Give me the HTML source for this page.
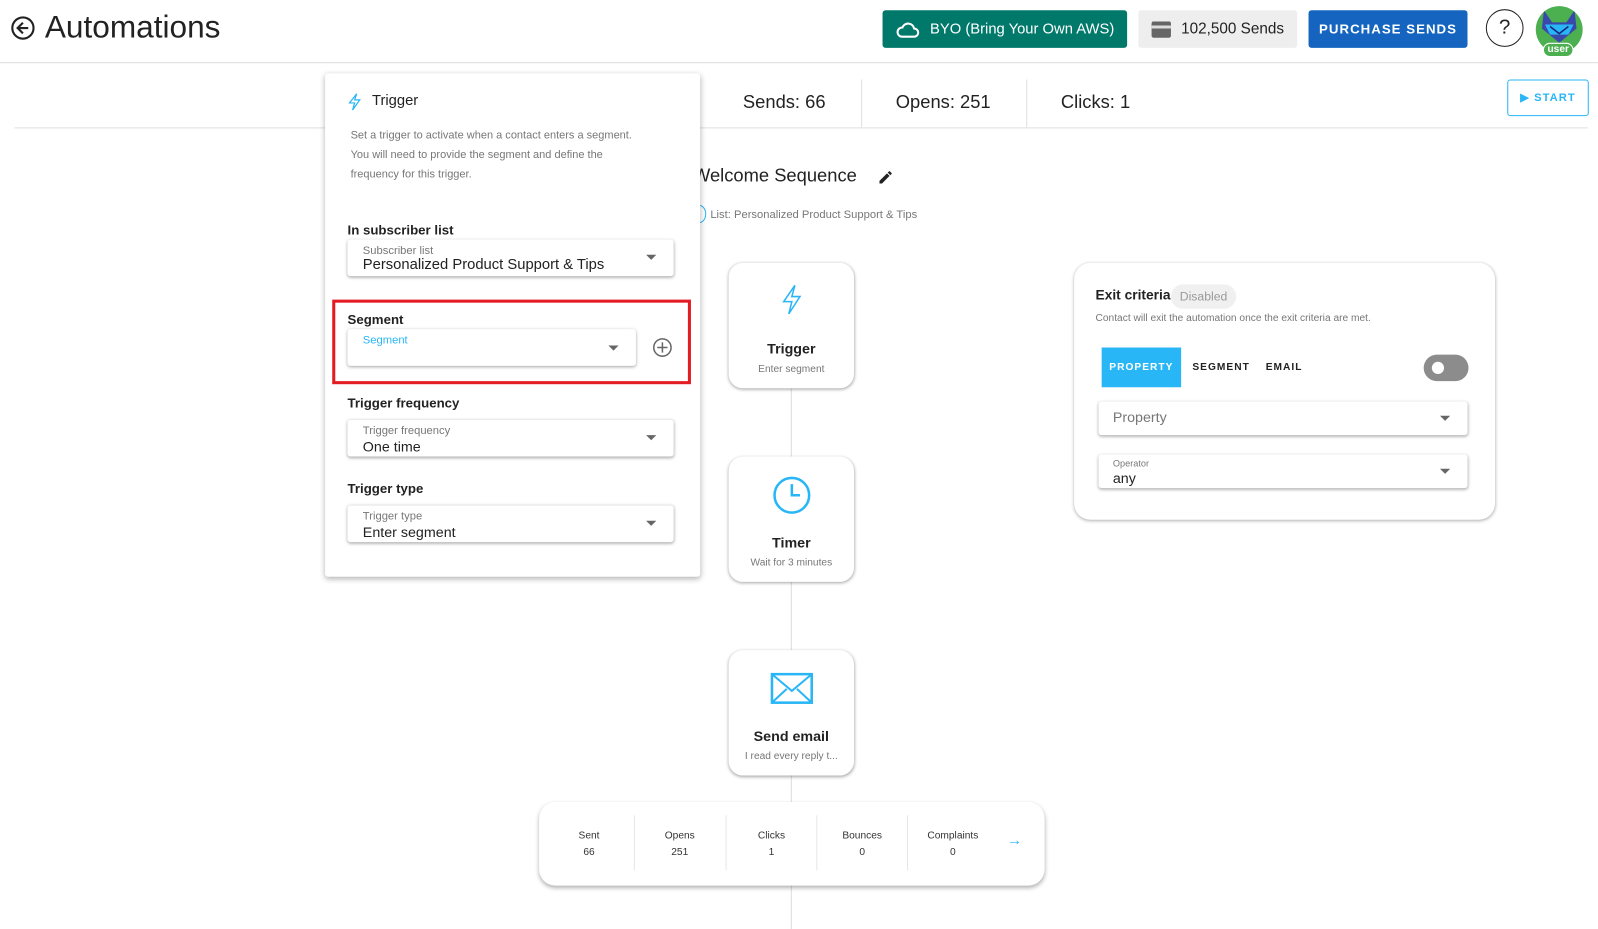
<!DOCTYPE html>
<html><head><meta charset="utf-8"><style>
*{box-sizing:border-box;margin:0;padding:0}
body{width:1598px;height:912px;overflow:hidden;background:#fff;font-family:"Liberation Sans",Roboto,sans-serif;color:#222;position:relative}
#w{position:absolute;left:0;top:0;width:1568px;height:895px;transform:scale(1.0191);transform-origin:0 0}
.a{position:absolute}
.btn{position:absolute;top:10px;height:37px;border-radius:3px;display:flex;align-items:center;justify-content:center;font-size:15px}
.card{position:absolute;background:#fff;border-radius:14px;box-shadow:0 1px 3px rgba(0,0,0,.35)}
.node{width:123px;height:123px;text-align:center}
.node .t{position:absolute;top:76px;width:100%;font-weight:bold;font-size:14px}
.node .s{position:absolute;top:99px;width:100%;font-size:10px;color:#777}
.field{position:absolute;background:#fff;border-radius:3px;box-shadow:0 1px 3px rgba(0,0,0,.35)}
.field .l{position:absolute;left:15px;top:5px;font-size:11px;color:#777}
.field .v{position:absolute;left:15px;top:17px;font-size:15px;color:#222}
.caret{position:absolute;right:17px;width:0;height:0;border-left:5px solid transparent;border-right:5px solid transparent;border-top:5px solid #666}
.lab{position:absolute;left:341px;font-size:13px;font-weight:bold;color:#222}
.st{position:absolute;top:813px;text-align:center;font-size:10px;color:#333;line-height:16px;width:90px}
.dv{position:absolute;top:800px;width:1px;height:54px;background:#e6e6e6}
</style></head><body><div id="w">
<svg class="a" style="left:10px;top:15px" width="25" height="25" viewBox="0 0 24 24"><circle cx="12" cy="12" r="10" fill="none" stroke="#222" stroke-width="2"/><path d="M17 12H8M12 7l-5 5 5 5" fill="none" stroke="#222" stroke-width="2"/></svg>
<div class="a" style="left:44px;top:9px;font-size:31px;color:#222">Automations</div>
<div class="btn" style="left:866px;width:240px;background:#00796b;color:#fff;font-size:14.5px"><svg width="24" height="18" viewBox="0 0 24 18" style="margin-right:10px"><path d="M6 16h12a4 4 0 0 0 0-8 6 6 0 0 0-11.5-1A4.5 4.5 0 0 0 6 16z" fill="none" stroke="#fff" stroke-width="2"/></svg>BYO (Bring Your Own AWS)</div>
<div class="btn" style="left:1117px;width:156px;background:#eee;color:#222"><span style="display:inline-block;width:19px;height:16px;background:#666;border-radius:2px;margin-right:10px;border-top:4px solid #666;box-shadow:inset 0 3px 0 #ddd"></span>102,500 Sends</div>
<div class="btn" style="left:1284px;width:156px;background:#1565c0;color:#fff;font-weight:bold;font-size:13px;letter-spacing:1px">PURCHASE SENDS</div>
<div class="a" style="left:1458px;top:9px;width:37px;height:37px;border:1.5px solid #222;border-radius:50%;text-align:center;line-height:34px;font-size:20px">?</div>
<div class="a" style="left:1507px;top:6px;width:46px;height:46px;border-radius:50%;background:#4caf50;overflow:hidden"><svg width="46" height="46" viewBox="0 0 46 46"><path d="M8 4l8 12h14l8-12 2 18-17 14L6 22z" fill="#3949ab"/><path d="M9 18h28l-5 10H14z" fill="#29b6f6"/><path d="M14 20l9 7 9-7" fill="none" stroke="#1a237e" stroke-width="1.5"/></svg></div>
<div class="a" style="left:1514px;top:42px;width:30px;height:14px;border-radius:7px;background:#4caf50;border:1px solid #fff;color:#fff;font-size:10px;font-weight:bold;text-align:center;line-height:12px">user</div>
<div class="a" style="left:0;top:61px;width:1568px;height:1px;background:#ddd"></div>
<div class="a" style="left:14px;top:125px;width:1544px;height:1px;background:#e0e0e0"></div>
<div class="a" style="left:845px;top:78px;width:1px;height:47px;background:#e0e0e0"></div>
<div class="a" style="left:1007px;top:78px;width:1px;height:47px;background:#e0e0e0"></div>
<div class="a" style="left:729px;top:90px;font-size:18px">Sends: 66</div>
<div class="a" style="left:879px;top:90px;font-size:18px">Opens: 251</div>
<div class="a" style="left:1041px;top:90px;font-size:18px">Clicks: 1</div>
<div class="a" style="left:1479px;top:78px;width:80px;height:36px;border:1px solid #29b6f6;border-radius:3px;color:#29b6f6;font-size:11px;font-weight:bold;letter-spacing:1px;line-height:34px;text-align:center">▶ START</div>
<div class="a" style="left:680px;top:162px;font-size:18px">Welcome Sequence</div>
<svg class="a" style="left:861px;top:166px" width="16" height="16" viewBox="0 0 24 24"><path d="M3 17.25V21h3.75L17.8 9.94l-3.75-3.75zM20.7 7.04a1 1 0 0 0 0-1.41l-2.34-2.34a1 1 0 0 0-1.41 0l-1.830 1.83 3.75 3.75z" fill="#222"/></svg>
<div class="a" style="left:679px;top:201px;width:14px;height:18px;border:1.5px solid #29b6f6;border-radius:50%"></div>
<div class="a" style="left:697px;top:205px;font-size:11px;color:#777">List: Personalized Product Support &amp; Tips</div>
<div class="a" style="left:776px;top:381px;width:1px;height:531px;background:#ddd"></div>
<div class="card node" style="left:715px;top:258px"><svg class="a" style="left:50px;top:20px" width="24" height="32" viewBox="0 0 24 32"><path d="M15 2L4 18h8l-3 12 11-17h-8z" fill="none" stroke="#29b6f6" stroke-width="1.5"/></svg><div class="t">Trigger</div><div class="s">Enter segment</div></div>
<div class="card node" style="left:715px;top:448px"><svg class="a" style="left:43px;top:19px" width="38" height="38" viewBox="0 0 38 38"><circle cx="19" cy="19" r="17" fill="none" stroke="#29b6f6" stroke-width="2.5"/><path d="M19 8v11h8" fill="none" stroke="#29b6f6" stroke-width="2.5"/></svg><div class="t">Timer</div><div class="s">Wait for 3 minutes</div></div>
<div class="card node" style="left:715px;top:638px"><svg class="a" style="left:41px;top:22px" width="42" height="31" viewBox="0 0 42 31"><rect x="1.5" y="1.5" width="39" height="28" fill="none" stroke="#29b6f6" stroke-width="2.5"/><path d="M2 2l19 16L40 2M2 29l14-13M40 29L26 16" fill="none" stroke="#29b6f6" stroke-width="2"/></svg><div class="t">Send email</div><div class="s">I read every reply t...</div></div>
<div class="card" style="left:529px;top:787px;width:496px;height:82px;border-radius:16px;box-shadow:0 2px 4px rgba(0,0,0,.3)"></div>
<div class="st" style="left:533px">Sent<br>66</div><div class="dv" style="left:622px"></div>
<div class="st" style="left:622px">Opens<br>251</div><div class="dv" style="left:712px"></div>
<div class="st" style="left:712px">Clicks<br>1</div><div class="dv" style="left:801px"></div>
<div class="st" style="left:801px">Bounces<br>0</div><div class="dv" style="left:890px"></div>
<div class="st" style="left:890px">Complaints<br>0</div>
<div class="a" style="left:988px;top:816px;color:#29b6f6;font-size:15px;font-weight:bold">→</div>
<div class="card" style="left:1054px;top:258px;width:413px;height:252px;border-radius:16px;box-shadow:0 1px 3px rgba(0,0,0,.3)"></div>
<div class="a" style="left:1075px;top:282px;font-size:13.5px;font-weight:bold">Exit criteria</div>
<div class="a" style="left:1149px;top:279px;width:64px;height:24px;border-radius:12px;background:#f0f0f0;color:#999;font-size:12px;text-align:center;line-height:24px">Disabled</div>
<div class="a" style="left:1075px;top:307px;font-size:10px;color:#777">Contact will exit the automation once the exit criteria are met.</div>
<div class="a" style="left:1081px;top:341px;width:78px;height:39px;background:#29b6f6;color:#fff;font-size:10px;font-weight:bold;letter-spacing:1px;line-height:39px;text-align:center">PROPERTY</div>
<div class="a" style="left:1170px;top:355px;font-size:10px;font-weight:bold;letter-spacing:1px;color:#222">SEGMENT</div>
<div class="a" style="left:1242px;top:355px;font-size:10px;font-weight:bold;letter-spacing:1px;color:#222">EMAIL</div>
<div class="a" style="left:1397px;top:348px;width:44px;height:26px;border-radius:13px;background:#8c8c8c"><div class="a" style="left:8px;top:7px;width:12px;height:12px;border-radius:50%;background:#fff"></div></div>
<div class="field" style="left:1078px;top:394px;width:362px;height:33px"><div class="a" style="left:14px;top:7px;font-size:14px;color:#777">Property</div><div class="caret" style="top:14px"></div></div>
<div class="field" style="left:1078px;top:446px;width:362px;height:33px"><div class="a" style="left:14px;top:4px;font-size:9px;color:#777">Operator</div><div class="a" style="left:14px;top:15px;font-size:14px">any</div><div class="caret" style="top:14px"></div></div>
<div class="a" style="left:319px;top:72px;width:368px;height:494px;background:#fff;box-shadow:0 2px 6px rgba(0,0,0,.3);border-radius:3px"></div>
<svg class="a" style="left:341px;top:91px" width="14" height="18" viewBox="0 0 14 18"><path d="M9 1L2 10h5l-2 7 7-10H7z" fill="none" stroke="#29b6f6" stroke-width="1.2"/></svg>
<div class="a" style="left:365px;top:91px;font-size:14.5px">Trigger</div>
<div class="a" style="left:344px;top:124px;width:285px;font-size:10.8px;color:#777;line-height:19px">Set a trigger to activate when a contact enters a segment. You will need to provide the segment and define the frequency for this trigger.</div>
<div class="lab" style="top:218px">In subscriber list</div>
<div class="field" style="left:341px;top:235px;width:320px;height:36px"><div class="l">Subscriber list</div><div class="v" style="font-size:14.5px">Personalized Product Support &amp; Tips</div><div class="caret" style="top:15px"></div></div>
<div class="a" style="left:326px;top:294px;width:352px;height:83px;border:3px solid #e31b23"></div>
<div class="lab" style="top:306px">Segment</div>
<div class="field" style="left:341px;top:323px;width:283px;height:36px"><div class="l" style="color:#29b6f6">Segment</div><div class="caret" style="top:16px"></div></div>
<svg class="a" style="left:640px;top:331px" width="20" height="20" viewBox="0 0 20 20"><circle cx="10" cy="10" r="8.5" fill="none" stroke="#666" stroke-width="1.5"/><path d="M10 5v10M5 10h10" stroke="#666" stroke-width="1.5"/></svg>
<div class="lab" style="top:388px">Trigger frequency</div>
<div class="field" style="left:341px;top:412px;width:320px;height:36px"><div class="l">Trigger frequency</div><div class="v" style="top:18px;font-size:14px">One time</div><div class="caret" style="top:15px"></div></div>
<div class="lab" style="top:472px">Trigger type</div>
<div class="field" style="left:341px;top:496px;width:320px;height:36px"><div class="l">Trigger type</div><div class="v" style="top:18px;font-size:14px">Enter segment</div><div class="caret" style="top:15px"></div></div>
</div></body></html>
